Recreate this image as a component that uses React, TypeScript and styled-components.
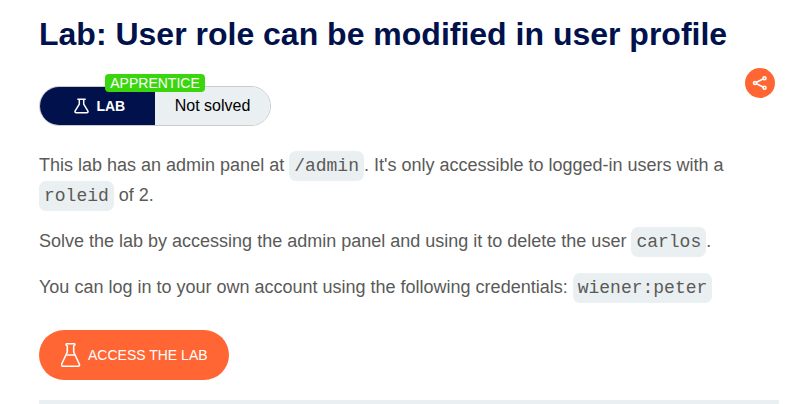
import React from "react";
import styled, { createGlobalStyle } from "styled-components";

const Global = createGlobalStyle`
  *{box-sizing:border-box}
  body{margin:0;background:#fff;font-family:"Liberation Sans",Arial,sans-serif;overflow:hidden}
`;
const Page = styled.main`
  width:740px;margin-left:39px;height:404px;display:flex;flex-direction:column;align-items:flex-start;
`;
const Title = styled.h1`
  margin:16px 0 0;font-size:32px;line-height:37px;font-weight:700;color:#00114b;white-space:nowrap;
`;
const StatusRow = styled.div`
  display:flex;justify-content:space-between;align-items:flex-start;width:736px;margin-top:15px;height:58px;
`;
const Status = styled.div`
  position:relative;margin-top:18px;width:232px;height:40px;border:1px solid #c8cccd;border-radius:20px;display:flex;
`;
const LabTag = styled.div`
  width:115px;background:#00114b;color:#fff;border-radius:19px 0 0 19px;display:flex;align-items:center;gap:7.4px;padding-left:34px;font-size:14px;font-weight:700;
`;
const State = styled.div`
  flex:1;background:#eaeff1;color:#000;border-radius:0 19px 19px 0;display:flex;align-items:center;justify-content:center;font-size:16px;
`;
const Level = styled.span`
  position:absolute;left:65px;top:-13px;width:100px;height:18px;border-radius:4px;background:#3ad60d;color:#fff;font-size:14px;line-height:19px;text-align:center;
`;
const Share = styled.button`
  margin:0;padding:0;width:30px;height:30px;border:0;border-radius:50%;background:#ff6633;display:grid;place-items:center;
`;
const Text = styled.p`
  margin:0 0 16px;font-size:18px;line-height:30px;color:#5a5a58;width:740px;
`;
const Body = styled.div`margin-top:24px;`;
const Code = styled.code`
  font-family:"Liberation Mono",monospace;font-size:18px;line-height:1;background:#eaeff1;border-radius:7px;padding:5px;
`;
const Access = styled.button`
  flex:none;margin:12px 0 0;width:190px;height:50px;border:0;border-radius:25px;background:#ff6633;color:#fff;font:14px "Liberation Sans",Arial,sans-serif;display:flex;align-items:center;padding:0 0 0 22px;gap:7px;
`;
const Rule = styled.hr`
  flex:none;width:740px;height:4px;border:0;background:#eaeff1;margin:20px 0 0;
`;
const LabFlask = () => (
  <svg width="15" height="16" viewBox="0 0 15 16" fill="none" stroke="#fff" strokeWidth="1.5" strokeLinejoin="round">
    <path d="M3.300 1.200h8.400M5.300 1.200v5L1.200 12.800Q.4 14.700 2.300 14.700h10.400q1.900 0 1.100-1.900L9.700 6.200v-5" />
  </svg>
);
const AccessFlask = () => (
  <svg width="20" height="24" viewBox="0 0 20 24" fill="none" stroke="#fff" strokeWidth="1.6" strokeLinejoin="round">
    <path d="M5.500 .8h8q1 1.500-.8 2.200V9L18.500 21.500q.2 1.700-1.400 1.700H1.900Q.3 23.200 .5 21.500L6.300 9V3Q4.500 2.300 5.500 .8zM5.200 12h8.600" />
  </svg>
);

export default function App() {
  return (
    <>
      <Global />
      <Page>
        <Title>Lab: User role can be modified in user profile</Title>
        <StatusRow>
          <Status>
            <LabTag><LabFlask />LAB</LabTag>
            <State>Not solved</State>
            <Level>APPRENTICE</Level>
          </Status>
          <Share aria-label="Share">
            <svg width="16" height="16" viewBox="0 0 16 16" fill="none" stroke="#fff" strokeWidth="1.600">
              <path d="M4.500 7.200l6.500-3.200M4.500 8.800l6.500 3.200" />
              <circle cx="3" cy="8" r="1.500" /><circle cx="12.500" cy="3.300" r="1.500" /><circle cx="12.500" cy="12.700" r="1.500" />
            </svg>
          </Share>
        </StatusRow>
        <Body>
          <Text>This lab has an admin panel at <Code>/admin</Code>. It's only accessible to logged-in users with a <Code>roleid</Code> of 2.</Text>
          <Text>Solve the lab by accessing the admin panel and using it to delete the user <Code>carlos</Code>.</Text>
          <Text>You can log in to your own account using the following credentials: <Code>wiener:peter</Code></Text>
        </Body>
        <Access><AccessFlask />ACCESS THE LAB</Access>
        <Rule />
      </Page>
    </>
  );
}
